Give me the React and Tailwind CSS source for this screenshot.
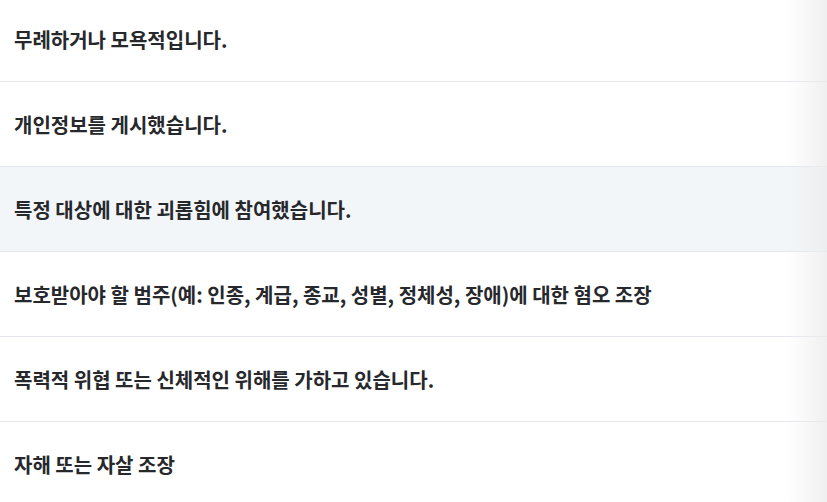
const reasons = [
  '무례하거나 모욕적입니다.',
  '개인정보를 게시했습니다.',
  '특정 대상에 대한 괴롭힘에 참여했습니다.',
  '보호받아야 할 범주(예: 인종, 계급, 종교, 성별, 정체성, 장애)에 대한 혐오 조장',
  '폭력적 위협 또는 신체적인 위해를 가하고 있습니다.',
  '자해 또는 자살 조장',
];

export default function App() {
  const active = 2;
  return (
    <div
      className="relative w-[827px] h-[502px] overflow-hidden bg-white"
      style={{ fontFamily: '"Noto Sans CJK KR", "Noto Sans", sans-serif' }}
    >
      <ul className="-mt-[3px]">
        {reasons.map((r, i) => (
          <li
            key={r}
            className={`flex items-center h-[85px] pl-[14px] pt-[2px] border-b border-[#e3e7ed] text-[20px] font-bold text-[#26282c] ${i === active ? 'bg-[#f3f6f9]' : ''}`}
          >
            {r}
          </li>
        ))}
      </ul>
      {/* scroll shadow on the right edge */}
      <div className="absolute top-0 right-0 h-full w-[40px] bg-gradient-to-r from-transparent to-[#ececec]/80 pointer-events-none" />
    </div>
  );
}
